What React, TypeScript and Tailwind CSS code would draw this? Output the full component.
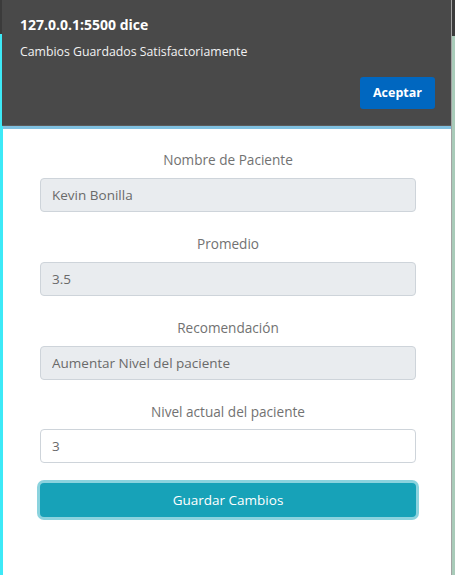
import { useState } from "react"

const font = { fontFamily: '"Open Sans", "Noto Sans", sans-serif' }

interface FieldProps {
  label: string
  value: string
  readOnly?: boolean
}

function Field({ label, value, readOnly = true }: FieldProps) {
  return (
    <div className="mb-[20px]">
      <label className="block text-center text-[13.6px] leading-[24px] text-[#727272] mb-[6px]">{label}</label>
      <input
        readOnly={readOnly}
        defaultValue={value}
        className={`block w-full h-[34px] px-[11px] rounded-[4px] border border-[#ced4da] text-[13.5px] text-[#6a6a6a] outline-none ${
          readOnly ? "bg-[#e9ecef]" : "bg-white"
        }`}
      />
    </div>
  )
}

function AlertDialog() {
  return (
    <div className="absolute left-[2px] top-0 w-[449px] h-[126px] bg-[#494949] border-b border-[#5a5a5a] text-white px-[18px] pt-[15px]">
      <div className="text-[14px] font-bold leading-[20px]">127.0.0.1:5500 dice</div>
      <div className="text-[12.3px] leading-[18px] mt-[8px] text-[#f2f2f2]">Cambios Guardados Satisfactoriamente</div>
      <div className="flex justify-end mt-[16px]">
        <button className="w-[75px] h-[32px] rounded-[3px] bg-[#0067c0] text-[12.5px] font-bold text-white mr-[-2px]">
          Aceptar
        </button>
      </div>
    </div>
  )
}

export default function App() {
  const [nivel, setNivel] = useState("3")

  return (
    <div className="relative w-[455px] h-[575px] flex overflow-hidden bg-white" style={font}>
      {/* left window edge */}
      <div className="w-[3px] flex flex-col">
        <div className="h-[34px] bg-[#3b3b3b]" />
        <div className="flex-1 bg-[#3de9f7]" />
      </div>

      {/* page */}
      <div className="flex-1 flex flex-col border-r border-[#a3a3a3]">
        <div className="h-[129px] bg-[#7fc0e0]" />
        <form className="pl-[37px] pr-[35px] pt-[19px]" onSubmit={(e) => e.preventDefault()}>
          <Field label="Nombre de Paciente" value="Kevin Bonilla" />
          <Field label="Promedio" value="3.5" />
          <Field label="Recomendación" value="Aumentar Nivel del paciente" />
          <div className="mb-[20px]">
            <label className="block text-center text-[13.6px] leading-[24px] text-[#727272] mb-[5px]">
              Nivel actual del paciente
            </label>
            <input
              value={nivel}
              onChange={(e) => setNivel(e.target.value)}
              className="block w-full h-[34px] px-[11px] rounded-[4px] border border-[#ced4da] bg-white text-[13.5px] text-[#6a6a6a] outline-none"
            />
          </div>
          <button
            type="submit"
            className="block w-full h-[34px] mt-[1px] rounded-[4px] bg-[#17a2b8] text-white text-[13.5px] ring-[3px] ring-[#8bd3de]"
          >
            Guardar Cambios
          </button>
        </form>
      </div>

      {/* right window edge */}
      <div className="w-[3px] flex flex-col">
        <div className="h-[36px] bg-[#3b3b3b]" />
        <div className="flex-1 bg-[#a9cbb9]" />
      </div>

      <AlertDialog />
    </div>
  )
}
